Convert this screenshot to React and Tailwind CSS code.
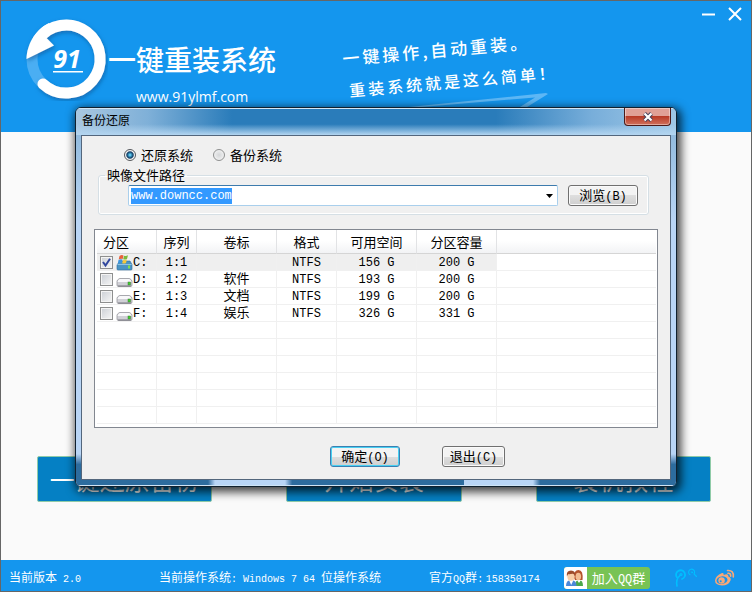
import React, { useEffect, useRef, useState } from "react";

const partitions = [
  { id: "C:", order: "1:1", label: "", format: "NTFS", free: "156 G", size: "200 G" },
  { id: "D:", order: "1:2", label: "软件", format: "NTFS", free: "193 G", size: "200 G" },
  { id: "E:", order: "1:3", label: "文档", format: "NTFS", free: "199 G", size: "200 G" },
  { id: "F:", order: "1:4", label: "娱乐", format: "NTFS", free: "326 G", size: "331 G" },
];

const emptyRows = [1, 2, 3, 4, 5, 6];

const mono = "font-['Liberation_Mono','Noto_Sans_CJK_SC',monospace]";

const Logo = () => (
  <svg width="84" height="84" viewBox="0 0 84 84" className="shrink-0">
    <defs>
      <filter id="logoShadow" x="-20%" y="-20%" width="140%" height="140%">
        <feDropShadow dx="1" dy="2" stdDeviation="2" floodColor="#0a4f8c" floodOpacity="0.6" />
      </filter>
    </defs>
    <circle cx="42" cy="42" r="34" fill="none" stroke="#4aaef3" strokeWidth="11" />
    <g filter="url(#logoShadow)">
      <path d="M19 67 A34 34 0 1 0 14 23" fill="none" stroke="#fff" strokeWidth="11" strokeLinecap="round" />
      <path d="M2.500 42 C3 27 12 12 25 6 L31 14 L22 20.500 L30 28.500 Z" fill="#fff" />
    </g>
    <text x="43" y="51" textAnchor="middle" fontSize="25" fontWeight="700" fontStyle="italic" fill="#fff" fontFamily="Noto Sans, sans-serif">
      91
    </text>
    <rect x="29" y="54" width="30" height="1.500" fill="#fff" />
  </svg>
);

const Swoosh = () => (
  <svg width="150" height="30" viewBox="0 0 150 30" fill="#7cc4f8" fillOpacity="0.7">
    <path d="M0 16 L147 1 L149 2 L112 25 L108 23 L136 5.500 L0 17 Z" />
  </svg>
);

const SystemDriveIcon = () => (
  <svg width="17" height="17" viewBox="0 0 17 17" className="shrink-0">
    <path d="M2 9.500 L4 7 H14 L16 10.500 V15 Q16 16 15 16 H2 Q1 16 1 15 V11 Z" fill="#4a94c4" stroke="#2c6a9a" strokeWidth="0.6" />
    <path d="M1.500 10.500 H15.500" stroke="#8fc4e4" strokeWidth="1" />
    <path d="M3.500 2 Q5.500 0.500 7.500 1.500 L6.700 5 Q5 4.200 2.700 5.500 Z" fill="#e8603c" />
    <path d="M8 1.700 Q10 2.500 12 1.300 L11 5 Q9.300 6 7.200 5.200 Z" fill="#7cb83c" />
    <path d="M2.500 6 Q4.500 4.800 6.500 5.600 L5.700 9 Q4 8.200 1.800 9.500 Z" fill="#3c94dc" />
    <path d="M7 5.800 Q9 6.600 10.900 5.500 L10 9 Q8.300 10 6.200 9.200 Z" fill="#f4c83c" />
    <rect x="12" y="11.500" width="2" height="3" fill="#7ee04c" />
  </svg>
);

const DriveIcon = () => (
  <svg width="17" height="17" viewBox="0 0 17 17" className="shrink-0">
    <path d="M1 10 Q1.500 8.500 3.500 7.500 H13.500 Q15.500 8.500 16 10 V14 Q16 15.500 14.500 15.500 H2.500 Q1 15.500 1 14 Z" fill="#d0d0d6" stroke="#8c8c94" strokeWidth="0.7" />
    <path d="M1.500 11 Q2 8.500 4 8 H13 Q15 8.500 15.500 11 Z" fill="#f8f8fa" />
    <path d="M2 15 H15" stroke="#77777f" strokeWidth="1" />
    <rect x="12" y="11" width="2.500" height="3" fill="#3ed02c" stroke="#43703c" strokeWidth="0.500" />
  </svg>
);

const PeopleIcon = () => (
  <svg width="20" height="18" viewBox="0 0 20 18">
    <path d="M10 17 Q10 11 14 11 Q18 11 18 17 Z" fill="#4aa84c" />
    <path d="M12 11 L14 14 L16 11 Z" fill="#fff" />
    <path d="M9 9 Q8.500 1 13.500 1 Q18.500 1 17.500 11 L15 11 H10 Z" fill="#b5532c" />
    <ellipse cx="13.300" cy="7.500" rx="2.800" ry="3.800" fill="#f2bd92" />
    <path d="M1 17 Q1 11 6 11 Q11.500 11 11.500 17 Z" fill="#4c88d8" />
    <path d="M4 11 L6.200 16 L8.500 11 Z" fill="#fff" />
    <ellipse cx="6" cy="7.500" rx="3.700" ry="4.200" fill="#f8cfa8" />
    <path d="M1.900 7.500 Q1 1.500 6 1.500 Q11 1.500 10.100 7.500 Q9.300 4.500 7.500 4.800 Q4 5.500 3.200 5 Z" fill="#9c4c2c" />
  </svg>
);

const TencentIcon = () => (
  <svg width="24" height="20" viewBox="0 0 24 20" fill="none" stroke="#00bfff" strokeLinecap="round">
    <path d="M3 18 Q1.500 11 6.500 7" strokeWidth="1.600" />
    <path d="M3 9.500 A4.500 4.500 0 1 1 8 11" strokeWidth="1.800" />
    <circle cx="7" cy="6.500" r="1" strokeWidth="1.200" />
    <path d="M16 6.700 A3 3 0 1 1 20 6 L22.500 8.500" strokeWidth="1.100" />
    <circle cx="18" cy="4.300" r="0.600" strokeWidth="1" />
  </svg>
);

const WeiboIcon = () => (
  <svg width="21" height="18" viewBox="0 0 21 18" fill="none">
    <path d="M8 4 Q10 3.500 9.700 6 Q14.500 4.200 14.400 7.500 Q17.500 8.500 16.500 11.500 Q14.500 16.500 8 16.500 Q1 16 1 11.500 Q1.500 6.500 8 4 Z" fill="#f8a878" />
    <ellipse cx="8" cy="11.200" rx="5.500" ry="3.800" fill="#1595ee" transform="rotate(-8 8 11.200)" />
    <circle cx="7.600" cy="11.500" r="3.200" fill="#f8a878" />
    <circle cx="6.700" cy="12.200" r="1" fill="#1595ee" />
    <path d="M14 4.300 Q16.800 4 16.700 7.200 M13.500 1.500 Q20 1 19.300 8" stroke="#f8a878" strokeWidth="1.600" strokeLinecap="round" />
  </svg>
);

const MainButton = ({ children }) => (
  <button
    type="button"
    className="h-[46px] flex-1 rounded-xs border border-[#8fcba8] bg-[#0580c4] text-[25px] leading-[44px] whitespace-nowrap text-white"
  >
    {children}
  </button>
);

const DialogButton = ({ children, letter, primary, className }) => (
  <button
    type="button"
    className={`h-[21px] rounded-[3px] border text-[13px] leading-[17px] bg-linear-to-b from-[#f3f3f3] from-50% via-[#dedede] via-50% to-[#cfcfcf] ${
      primary
        ? "border-[#3c7fb1] shadow-[inset_0_0_0_1px_#48d0f2]"
        : "border-[#707070] shadow-[inset_0_0_0_1px_#fafafa]"
    } ${className}`}
  >
    {children}
    <span className={`${mono} text-xs`}>({letter})</span>
  </button>
);

const Radio = ({ id, label, checked, onChange }) => (
  <label htmlFor={id} className="flex items-center gap-[5px]">
    <input
      id={id}
      type="radio"
      name="mode"
      checked={checked}
      onChange={onChange}
      className="size-3 appearance-none rounded-full border border-[#8e8f8f] bg-radial from-[#d4d6d8] to-[#fafafa] checked:border-[#56585c] checked:from-[#5cc8f0] checked:from-10% checked:via-[#0e3b62] checked:via-45% checked:to-[#f4f4f4] checked:to-60%"
    />
    {label}
  </label>
);

const Check = ({ label, checked, onChange }) => (
  <span className="relative size-[13px] shrink-0">
    <input
      type="checkbox"
      aria-label={label}
      checked={checked}
      onChange={onChange}
      className="peer block size-[13px] appearance-none border border-[#8e8f8f] bg-linear-to-br from-[#cbcfd5] to-[#f6f6f6] shadow-[inset_0_0_0_1px_#f4f4f4]"
    />
    <svg viewBox="0 0 13 13" className="pointer-events-none absolute inset-0 hidden size-[13px] peer-checked:block">
      <path d="M3 6 L5.500 9.500 L10 2.800" fill="none" stroke="#31479e" strokeWidth="2" />
    </svg>
  </span>
);

const PartitionTable = () => {
  const [selected, setSelected] = useState(["C:"]);

  const toggle = (id) => {
    setSelected(selected.includes(id) ? selected.filter((s) => s !== id) : [...selected, id]);
  };

  const th = "h-6 border-r border-b border-r-[#e2e3e5] border-b-[#d5d5d5] p-0 font-normal";
  const td = "h-[17px] border-r border-b border-[#f0f0f0] p-0 leading-[14px]";
  const text = "pt-[2px]";

  return (
    <div className="border border-[#828790] bg-white pr-px pb-[3px] pl-[2px]">
      <table className="w-full table-fixed border-separate border-spacing-0 text-center text-[13px]">
        <colgroup>
          <col className="w-[60px]" />
          <col className="w-10" />
          <col className="w-20" />
          <col className="w-[60px]" />
          <col className="w-20" />
          <col className="w-20" />
          <col />
        </colgroup>
        <thead className="bg-linear-to-b from-white from-45% to-[#f1f2f4]">
          <tr>
            <th className={`${th} pl-[6px] text-left`}>分区</th>
            <th className={th}>序列</th>
            <th className={th}>卷标</th>
            <th className={th}>格式</th>
            <th className={th}>可用空间</th>
            <th className={th}>分区容量</th>
            <td className="border-b border-[#d5d5d5] p-0" />
          </tr>
        </thead>
        <tbody>
          {partitions.map((p, i) => (
            <tr key={p.id} className={`${mono} ${i === 0 ? "[&>td:not(:last-child)]:bg-[#efefef]" : ""}`}>
              <td className={td}>
                <div className="flex h-4 items-center gap-[3px] pl-[3px] text-xs">
                  <Check label={p.id} checked={selected.includes(p.id)} onChange={() => toggle(p.id)} />
                  <span className="flex items-center">
                    {i === 0 ? <SystemDriveIcon /> : <DriveIcon />}
                    <span className={text}>{p.id}</span>
                  </span>
                </div>
              </td>
              <td className={`${td} ${text} text-xs`}>{p.order}</td>
              <td className={`${td} ${text}`}>{p.label}</td>
              <td className={`${td} ${text} text-xs`}>{p.format}</td>
              <td className={`${td} ${text} text-xs`}>{p.free}</td>
              <td className={`${td} ${text} text-xs`}>{p.size}</td>
              <td className="border-b border-[#f0f0f0] p-0" />
            </tr>
          ))}
          {emptyRows.map((row) => (
            <tr key={row}>
              <td className={td} />
              <td className={td} />
              <td className={td} />
              <td className={td} />
              <td className={td} />
              <td className={td} />
              <td className="border-b border-[#f0f0f0] p-0" />
            </tr>
          ))}
        </tbody>
      </table>
    </div>
  );
};

const FrameSide = () => (
  <div className="flex w-[5px] flex-col justify-end">
    <div className="h-[26px] bg-linear-to-b from-[#b9d5f5] to-[#2d6c9e] to-40%" />
  </div>
);

const BackupDialog = () => {
  const [mode, setMode] = useState("restore");
  const [path, setPath] = useState("www.downcc.com");
  const pathRef = useRef(null);

  useEffect(() => {
    pathRef.current?.select();
  }, []);

  return (
    <div
      role="dialog"
      aria-labelledby="dialogTitle"
      className="overflow-hidden rounded-md border border-[#10202e] bg-linear-to-b from-[#8fb9dc] from-5% via-[#b9d5f5] via-30% to-[#b9d5f5] shadow-[2px_3px_10px_2px_rgba(0,0,0,0.75)]"
    >
      <div className="flex h-[27px] items-start justify-between bg-[linear-gradient(to_bottom,#d3e6f5_1px,transparent_1px,transparent_60%,#b3d5f0),linear-gradient(to_right,#a9c7e0,#7fb0d8_12%,#2a7cba_26%,#2a7cba_70%,#78aeda_86%,#a0c8e6)] pr-[5px] pl-[6px]">
        <h2 id="dialogTitle" className="text-xs leading-6 text-black">
          备份还原
        </h2>
        <button
          type="button"
          aria-label="关闭"
          className="flex h-[18px] w-[47px] items-center justify-center rounded-b-[4px] border border-t-0 border-[#4c1a18] bg-linear-to-b from-[#e0a096] from-45% via-[#b93a26] via-50% to-[#d0705c] shadow-[inset_0_0_0_1px_rgba(255,255,255,0.4)]"
        >
          <svg width="12" height="10" viewBox="0 0 12 10">
            <path d="M2.500 1.500 L9.500 8.500 M9.500 1.500 L2.500 8.500" stroke="#43405c" strokeWidth="4" />
            <path d="M2.500 1.500 L9.500 8.500 M9.500 1.500 L2.500 8.500" stroke="#fff" strokeWidth="2.200" />
          </svg>
        </button>
      </div>

      <div className="flex">
        <FrameSide />
        <div className="flex-1 border border-[#53667c] bg-[#f0f0f0] px-3 pt-[7px] pb-3 text-[13px] text-black">
          <div className="flex gap-5 pl-[30px] leading-6">
            <Radio id="restore" label="还原系统" checked={mode === "restore"} onChange={() => setMode("restore")} />
            <Radio id="backup" label="备份系统" checked={mode === "backup"} onChange={() => setMode("backup")} />
          </div>

          <fieldset className="mr-[9px] ml-1 flex gap-[10px] rounded-[3px] border border-[#d5dfe5] pt-[2px] pr-[10px] pb-2 pl-[29px] shadow-[inset_0_0_0_1px_#fff]">
            <legend className="-ml-[23px] px-[2px] leading-4">映像文件路径</legend>
            <div className="flex h-[21px] flex-1 items-center rounded-xs border border-[#a9cfec] border-t-[#3d7bad] bg-white">
              <input
                ref={pathRef}
                type="text"
                aria-label="映像文件路径"
                value={path}
                onChange={(e) => setPath(e.target.value)}
                className={`${mono} min-w-0 flex-1 pl-[2px] text-xs leading-4 outline-none selection:bg-[#3399ff] selection:text-white`}
              />
              <button type="button" aria-label="展开" className="flex w-4 justify-center">
                <svg width="7" height="4" viewBox="0 0 7 4">
                  <path d="M0 0 H7 L3.500 4 Z" fill="#000" />
                </svg>
              </button>
            </div>
            <DialogButton letter="B" className="w-[70px]">
              浏览
            </DialogButton>
          </fieldset>

          <div className="mt-[14px]">
            <PartitionTable />
          </div>

          <div className="mt-[18px] flex justify-center gap-[42px] pl-[83px]">
            <DialogButton letter="O" primary className="w-[70px]">
              确定
            </DialogButton>
            <DialogButton letter="C" className="w-[63px]">
              退出
            </DialogButton>
          </div>
        </div>
        <FrameSide />
      </div>

      <div className="flex h-[6px] border-b border-[#cfe4f5]">
        <div className="w-[139px] bg-linear-to-r from-[#2d6c9e] from-95% to-[#b9d5f5]" />
        <div className="flex-1" />
        <div className="w-[179px] bg-linear-to-r from-[#b9d5f5] via-[#2d6c9e] via-4% to-[#2d6c9e]" />
        <div className="flex-1" />
        <div className="w-[143px] bg-linear-to-l from-[#2d6c9e] from-95% to-[#b9d5f5]" />
      </div>
    </div>
  );
};

const App = () => {
  return (
    <div className="relative flex min-h-screen flex-col border border-[#666] bg-[#fafafa] font-['Noto_Sans_CJK_SC',sans-serif]">
      <header className="relative flex h-[131px] items-start bg-[#1496ee] text-white">
        <div className="flex pt-4 pl-[23px]">
          <Logo />
          <div className="pt-5">
            <h1 className="text-[28px] leading-[44px] font-medium">一键重装系统</h1>
            <p className="pt-1 pl-7 font-['Open_Sans',sans-serif] text-sm leading-6 font-medium">www.91ylmf.com</p>
          </div>
        </div>
        <div className="ml-[66px] -rotate-5 pt-8 text-[17px] leading-8 font-medium tracking-[3px] whitespace-nowrap">
          <p>一键操作,自动重装。</p>
          <p className="pl-1 text-base leading-8">重装系统就是这么简单！</p>
        </div>
        <div className="absolute top-[91px] left-[398px]">
          <Swoosh />
        </div>
        <div className="ml-auto flex gap-3 pt-[6px] pr-[9px]">
          <button type="button" aria-label="最小化">
            <svg width="15" height="14" viewBox="0 0 15 14">
              <path d="M1 7.500 H14" stroke="#fff" strokeWidth="2" />
            </svg>
          </button>
          <button type="button" aria-label="关闭窗口">
            <svg width="14" height="14" viewBox="0 0 14 14">
              <path d="M1 1 L13 13 M13 1 L1 13" stroke="#fff" strokeWidth="2" />
            </svg>
          </button>
        </div>
      </header>

      <main className="flex flex-1 items-end gap-[74px] pr-10 pb-[58px] pl-9">
        <MainButton>一键还原备份</MainButton>
        <MainButton>开始安装</MainButton>
        <MainButton>装机教程</MainButton>
      </main>

      <footer className="flex h-[31px] items-center bg-[#1496ee] pt-1 pr-4 pl-2 text-xs whitespace-nowrap text-white">
        <p>
          当前版本<span className={`${mono} text-[10px]`}> 2.0</span>
        </p>
        <p className="ml-[78px]">
          当前操作系统<span className={`${mono} text-[10px]`}>: Windows 7 64 </span>位操作系统
        </p>
        <p className="ml-12">
          官方<span className={`${mono} text-[10px]`}>QQ</span>群
          <span className={`${mono} text-[10px]`}>:</span> <span className={`${mono} text-[10px]`}>158350174</span>
        </p>
        <a href="#qq" className="ml-6 flex h-[22px] overflow-hidden rounded-[3px] bg-[#78c355]">
          <span className="flex w-[23px] items-center justify-center bg-white">
            <PeopleIcon />
          </span>
          <span className="px-[5px] text-[13px] leading-[22px]">
            加入<span className={`${mono} text-xs`}>QQ</span>群
          </span>
        </a>
        <div className="ml-auto flex items-center gap-4">
          <a href="#tencent" aria-label="腾讯微博">
            <TencentIcon />
          </a>
          <a href="#weibo" aria-label="新浪微博">
            <WeiboIcon />
          </a>
        </div>
      </footer>

      <div className="absolute inset-x-0 top-[106px] px-[74px]">
        <BackupDialog />
      </div>
    </div>
  );
};

export default App;
